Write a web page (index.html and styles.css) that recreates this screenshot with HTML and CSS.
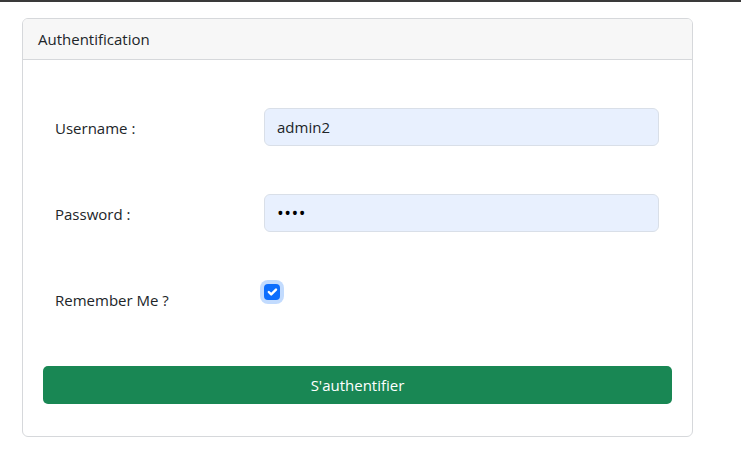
FILE: index.html
```html
<!DOCTYPE html>
<html lang="fr">
<head>
<meta charset="utf-8">
<title>Authentification</title>
<link rel="stylesheet" href="styles.css">
</head>
<body>
<div class="topbar"></div>
<div class="page">
  <form class="card">
    <div class="card-header">Authentification</div>
    <div class="card-body">
      <div class="row">
        <label class="label" for="u">Username :</label>
        <input class="control" id="u" type="text" value="admin2">
      </div>
      <div class="row">
        <label class="label" for="p">Password :</label>
        <input class="control control-pw" id="p" type="password" value="1234">
      </div>
      <div class="row">
        <label class="label" for="r">Remember Me ?</label>
        <div class="check-cell">
          <span class="check" id="r">
            <svg viewBox="0 0 20 20" width="16" height="16"><path d="M6 10l3 3 6-6" fill="none" stroke="#fff" stroke-width="3" stroke-linecap="round" stroke-linejoin="round"/></svg>
          </span>
        </div>
      </div>
      <button class="btn" type="button">S'authentifier</button>
    </div>
  </form>
</div>
</body>
</html>
```
FILE: styles.css
```css
* { box-sizing: border-box; }
html, body { margin: 0; padding: 0; background: #fff; }
body {
  font-family: "Open Sans", "Noto Sans", sans-serif;
  font-size: 15px;
  color: #212529;
}
.topbar { height: 2px; background: #3a3a3a; }
.page { padding: 16px 0 0 22px; width: 693px; }
.card {
  border: 1px solid #d6d8db;
  border-radius: 6px;
  overflow: hidden;
}
.card-header {
  height: 41px;
  padding: 0 15px;
  display: flex;
  align-items: center;
  background: #f7f7f7;
  border-bottom: 1px solid #d6d8db;
}
.card-body {
  padding: 48px 20px 32px;
  display: flex;
  flex-direction: column;
  gap: 48px;
}
.row {
  display: grid;
  grid-template-columns: 209px 395px;
  padding-left: 12px;
  height: 38px;
  align-items: center;
}
.label { padding-top: 1px; }
.control {
  height: 38px;
  border: 1px solid #d9dfe8;
  border-radius: 6px;
  background: #e8f0fe;
  padding: 0 12px;
  font: inherit;
  font-size: 15px;
  color: #212529;
  outline: none;
}
.control-pw { font-size: 18px; color: #000; letter-spacing: 0.5px; }
.check-cell { align-self: start; padding-top: 4px; }
.check {
  width: 16px;
  height: 16px;
  border-radius: 4px;
  background: #0d6efd;
  display: flex;
  align-items: center;
  justify-content: center;
  box-shadow: 0 0 0 4px rgba(13,110,253,.25);
}
.btn {
  height: 38px;
  border: 0;
  border-radius: 5px;
  background: #198754;
  color: #fff;
  font: inherit;
  font-size: 15px;
  cursor: pointer;
}
```
